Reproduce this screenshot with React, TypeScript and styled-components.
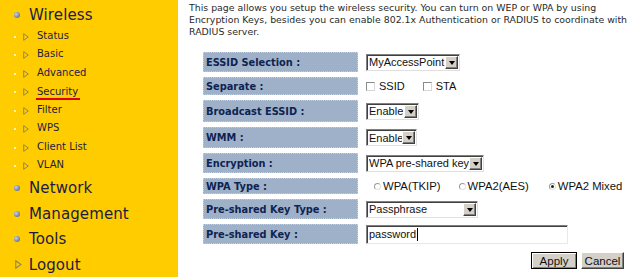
import styled, { createGlobalStyle } from 'styled-components';

const GlobalStyle = createGlobalStyle`
  html, body {
    margin: 0;
    padding: 0;
    background: #ffffff;
  }
  body {
    width: 640px;
    height: 277px;
    overflow: hidden;
    font-family: 'DejaVu Sans', Verdana, sans-serif;
  }
`;

const Page = styled.div`
  display: flex;
  width: 640px;
  height: 277px;
`;

const Sidebar = styled.nav`
  width: 178px;
  flex-shrink: 0;
  background: #ffcc00;
  padding-top: 1.5px;
  box-sizing: border-box;
`;

const MainItem = styled.div<{ $h?: number }>`
  display: flex;
  align-items: center;
  height: ${(p) => p.$h ?? 25.5}px;
  padding-left: 14px;
  font-size: 15px;
  color: #1b1b45;
  letter-spacing: 0.1px;
`;

const Bullet = styled.span`
  width: 6px;
  height: 6px;
  border-radius: 50%;
  margin-right: 9px;
  background: radial-gradient(circle at 35% 35%, #c8d2e6 0%, #7d8bb0 55%, #4d5a80 100%);
`;

const LogoutMark = styled.span`
  display: flex;
  margin: 0 7px 0 1px;
`;

const Arrow = styled.svg`
  flex-shrink: 0;
`;

const SubList = styled.div`
  display: flex;
  flex-direction: column;
`;

const SubItem = styled.div`
  display: flex;
  align-items: center;
  height: 18.5px;
  padding-left: 14px;
  font-size: 10px;
  color: #1b1b45;
`;

const Dot = styled.span`
  width: 2px;
  height: 2px;
  background: #fff3c0;
  margin-right: 7px;
`;

const SubLabel = styled.span<{ $active?: boolean }>`
  margin-left: 7px;
  padding: 0 2px 1px 1px;
  margin-top: ${(p) => (p.$active ? '2px' : '0')};
  border-bottom: 2px solid ${(p) => (p.$active ? '#e00000' : 'transparent')};
`;

const Content = styled.main`
  flex: 1;
  padding: 2px 0 0 11px;
`;

const Intro = styled.p`
  margin: 0;
  width: 450px;
  font-size: 9.4px;
  line-height: 12px;
  color: #2a2a2a;
`;

const Form = styled.div`
  margin: 14px 0 0 14px;
  width: 436px;
  display: flex;
  flex-direction: column;
  gap: 5px;
`;

const Row = styled.div<{ $h: number }>`
  display: grid;
  grid-template-columns: 155px 1fr;
  column-gap: 4px;
  height: ${(p) => p.$h}px;
`;

const Label = styled.div`
  display: flex;
  align-items: center;
  padding-left: 2px;
  background: #9fb1c9;
  border: 1px dotted #c3cedc;
  font-size: 9.8px;
  font-weight: bold;
  color: #0e2350;
  box-sizing: border-box;
`;

const Value = styled.div<{ $pad?: number }>`
  display: flex;
  align-items: center;
  padding-left: ${(p) => p.$pad ?? 4}px;
  font-family: 'Liberation Sans', Arial, sans-serif;
  font-size: 11px;
  color: #111;
  white-space: nowrap;
`;

const SelectBox = styled.div<{ $w: number }>`
  display: flex;
  align-items: center;
  width: ${(p) => p.$w}px;
  height: 17px;
  box-sizing: border-box;
  background: #fff;
  border: 1px solid;
  border-color: #808080 #e0e0e0 #e0e0e0 #808080;
  box-shadow: inset 1px 1px 0 #404040;
  padding: 1px 1px 1px 2px;
`;

const SelectText = styled.span`
  flex: 1;
  min-width: 0;
`;

const DropButton = styled.span`
  display: flex;
  align-items: center;
  justify-content: center;
  flex-shrink: 0;
  width: 13px;
  height: 13px;
  box-sizing: border-box;
  background: #d4d0c8;
  border: 1px solid;
  border-color: #fff #404040 #404040 #fff;
  box-shadow: inset -1px -1px 0 #808080;
`;

const DropTriangle = styled.span`
  width: 0;
  height: 0;
  border-left: 3.5px solid transparent;
  border-right: 3.5px solid transparent;
  border-top: 4px solid #000;
  margin-top: 1px;
`;

const TextField = styled.div`
  display: flex;
  align-items: center;
  width: 202px;
  height: 19px;
  box-sizing: border-box;
  background: #fff;
  border: 1px solid;
  border-color: #808080 #e8e8e8 #e8e8e8 #808080;
  box-shadow: inset 1px 1px 0 #404040;
  padding-left: 2px;
`;

const Caret = styled.span`
  width: 1px;
  height: 13px;
  background: #000;
  margin-left: 1px;
`;

const Choice = styled.label<{ $gap: number; $wide?: boolean }>`
  display: flex;
  align-items: center;
  flex-shrink: 0;
  margin-right: ${(p) => p.$gap}px;
  font-size: ${(p) => (p.$wide ? '11.3px' : '11px')};
`;

const CheckMark = styled.span`
  width: 9px;
  height: 9px;
  box-sizing: border-box;
  border: 1px solid #8a8a8a;
  border-right-color: #d8d8d8;
  border-bottom-color: #d8d8d8;
  background: #fff;
  margin-right: 4px;
`;

const RadioMark = styled.span<{ $on?: boolean }>`
  position: relative;
  width: 7px;
  height: 7px;
  box-sizing: border-box;
  border-radius: 50%;
  border: 1px solid #9a9a9a;
  border-right-color: #e0e0e0;
  border-bottom-color: #e0e0e0;
  background: #fff;
  margin-right: 2px;
  &::after {
    content: '';
    display: ${(p) => (p.$on ? 'block' : 'none')};
    position: absolute;
    left: 1px;
    top: 1px;
    width: 3px;
    height: 3px;
    border-radius: 50%;
    background: #222;
  }
`;

const Actions = styled.div`
  display: flex;
  justify-content: flex-end;
  gap: 4px;
  margin-top: 3px;
  padding-right: 15px;
`;

const Button = styled.button<{ $default?: boolean; $w: number }>`
  width: ${(p) => p.$w}px;
  height: 17px;
  padding: 0;
  box-sizing: border-box;
  font-family: 'Liberation Sans', Arial, sans-serif;
  font-size: 11.5px;
  color: #111;
  background-color: #d4d0c8;
  background-image: radial-gradient(#c4c0b8 0.6px, transparent 0.7px);
  background-size: 2px 2px;
  border: 1px solid;
  border-color: ${(p) => (p.$default ? '#000' : '#fff #404040 #404040 #fff')};
  box-shadow: ${(p) =>
    p.$default ? 'inset 1px 1px 0 #fff, inset -1px -1px 0 #808080' : 'inset -1px -1px 0 #808080'};
`;

const Tri = ({ size = 8 }: { size?: number }) => (
  <Arrow width={size * 0.75} height={size} viewBox="0 0 6 8">
    <path d="M0.7 0.7 L5.3 4 L0.7 7.3 Z" fill="none" stroke="#8f865a" strokeWidth="1" />
  </Arrow>
);

const subItems = ['Status', 'Basic', 'Advanced', 'Security', 'Filter', 'WPS', 'Client List', 'VLAN'];

function Select({ width, value }: { width: number; value: string }) {
  return (
    <SelectBox $w={width}>
      <SelectText>{value}</SelectText>
      <DropButton>
        <DropTriangle />
      </DropButton>
    </SelectBox>
  );
}

function App() {
  return (
    <Page>
      <GlobalStyle />
      <Sidebar>
        <MainItem $h={26}>
          <Bullet />
          Wireless
        </MainItem>
        <SubList>
          {subItems.map((name) => (
            <SubItem key={name}>
              <Dot />
              <Tri />
              <SubLabel $active={name === 'Security'}>{name}</SubLabel>
            </SubItem>
          ))}
        </SubList>
        <MainItem>
          <Bullet />
          Network
        </MainItem>
        <MainItem>
          <Bullet />
          Management
        </MainItem>
        <MainItem>
          <Bullet />
          Tools
        </MainItem>
        <MainItem>
          <LogoutMark>
            <Tri size={9} />
          </LogoutMark>
          Logout
        </MainItem>
      </Sidebar>
      <Content>
        <Intro>
          This page allows you setup the wireless security. You can turn on WEP or WPA by using Encryption
          Keys, besides you can enable 802.1x Authentication or RADIUS to coordinate with RADIUS server.
        </Intro>
        <Form>
          <Row $h={20}>
            <Label>ESSID Selection :</Label>
            <Value>
              <Select width={94} value="MyAccessPoint" />
            </Value>
          </Row>
          <Row $h={18}>
            <Label>Separate :</Label>
            <Value>
              <Choice $gap={18}>
                <CheckMark />
                SSID
              </Choice>
              <Choice $gap={0}>
                <CheckMark />
                STA
              </Choice>
            </Value>
          </Row>
          <Row $h={22}>
            <Label>Broadcast ESSID :</Label>
            <Value>
              <Select width={53} value="Enable" />
            </Value>
          </Row>
          <Row $h={21}>
            <Label>WMM :</Label>
            <Value>
              <Select width={51} value="Enable" />
            </Value>
          </Row>
          <Row $h={20}>
            <Label>Encryption :</Label>
            <Value>
              <Select width={118} value="WPA pre-shared key" />
            </Value>
          </Row>
          <Row $h={16}>
            <Label>WPA Type :</Label>
            <Value $pad={12}>
              <Choice $gap={18} $wide>
                <RadioMark />
                WPA(TKIP)
              </Choice>
              <Choice $gap={20} $wide>
                <RadioMark />
                WPA2(AES)
              </Choice>
              <Choice $gap={0} $wide>
                <RadioMark $on />
                WPA2 Mixed
              </Choice>
            </Value>
          </Row>
          <Row $h={20}>
            <Label>Pre-shared Key Type :</Label>
            <Value>
              <Select width={112} value="Passphrase" />
            </Value>
          </Row>
          <Row $h={20}>
            <Label>Pre-shared Key :</Label>
            <Value>
              <TextField>
                password
                <Caret />
              </TextField>
            </Value>
          </Row>
          <Actions>
            <Button $default $w={46}>
              Apply
            </Button>
            <Button $w={43}>Cancel</Button>
          </Actions>
        </Form>
      </Content>
    </Page>
  );
}

export default App;
